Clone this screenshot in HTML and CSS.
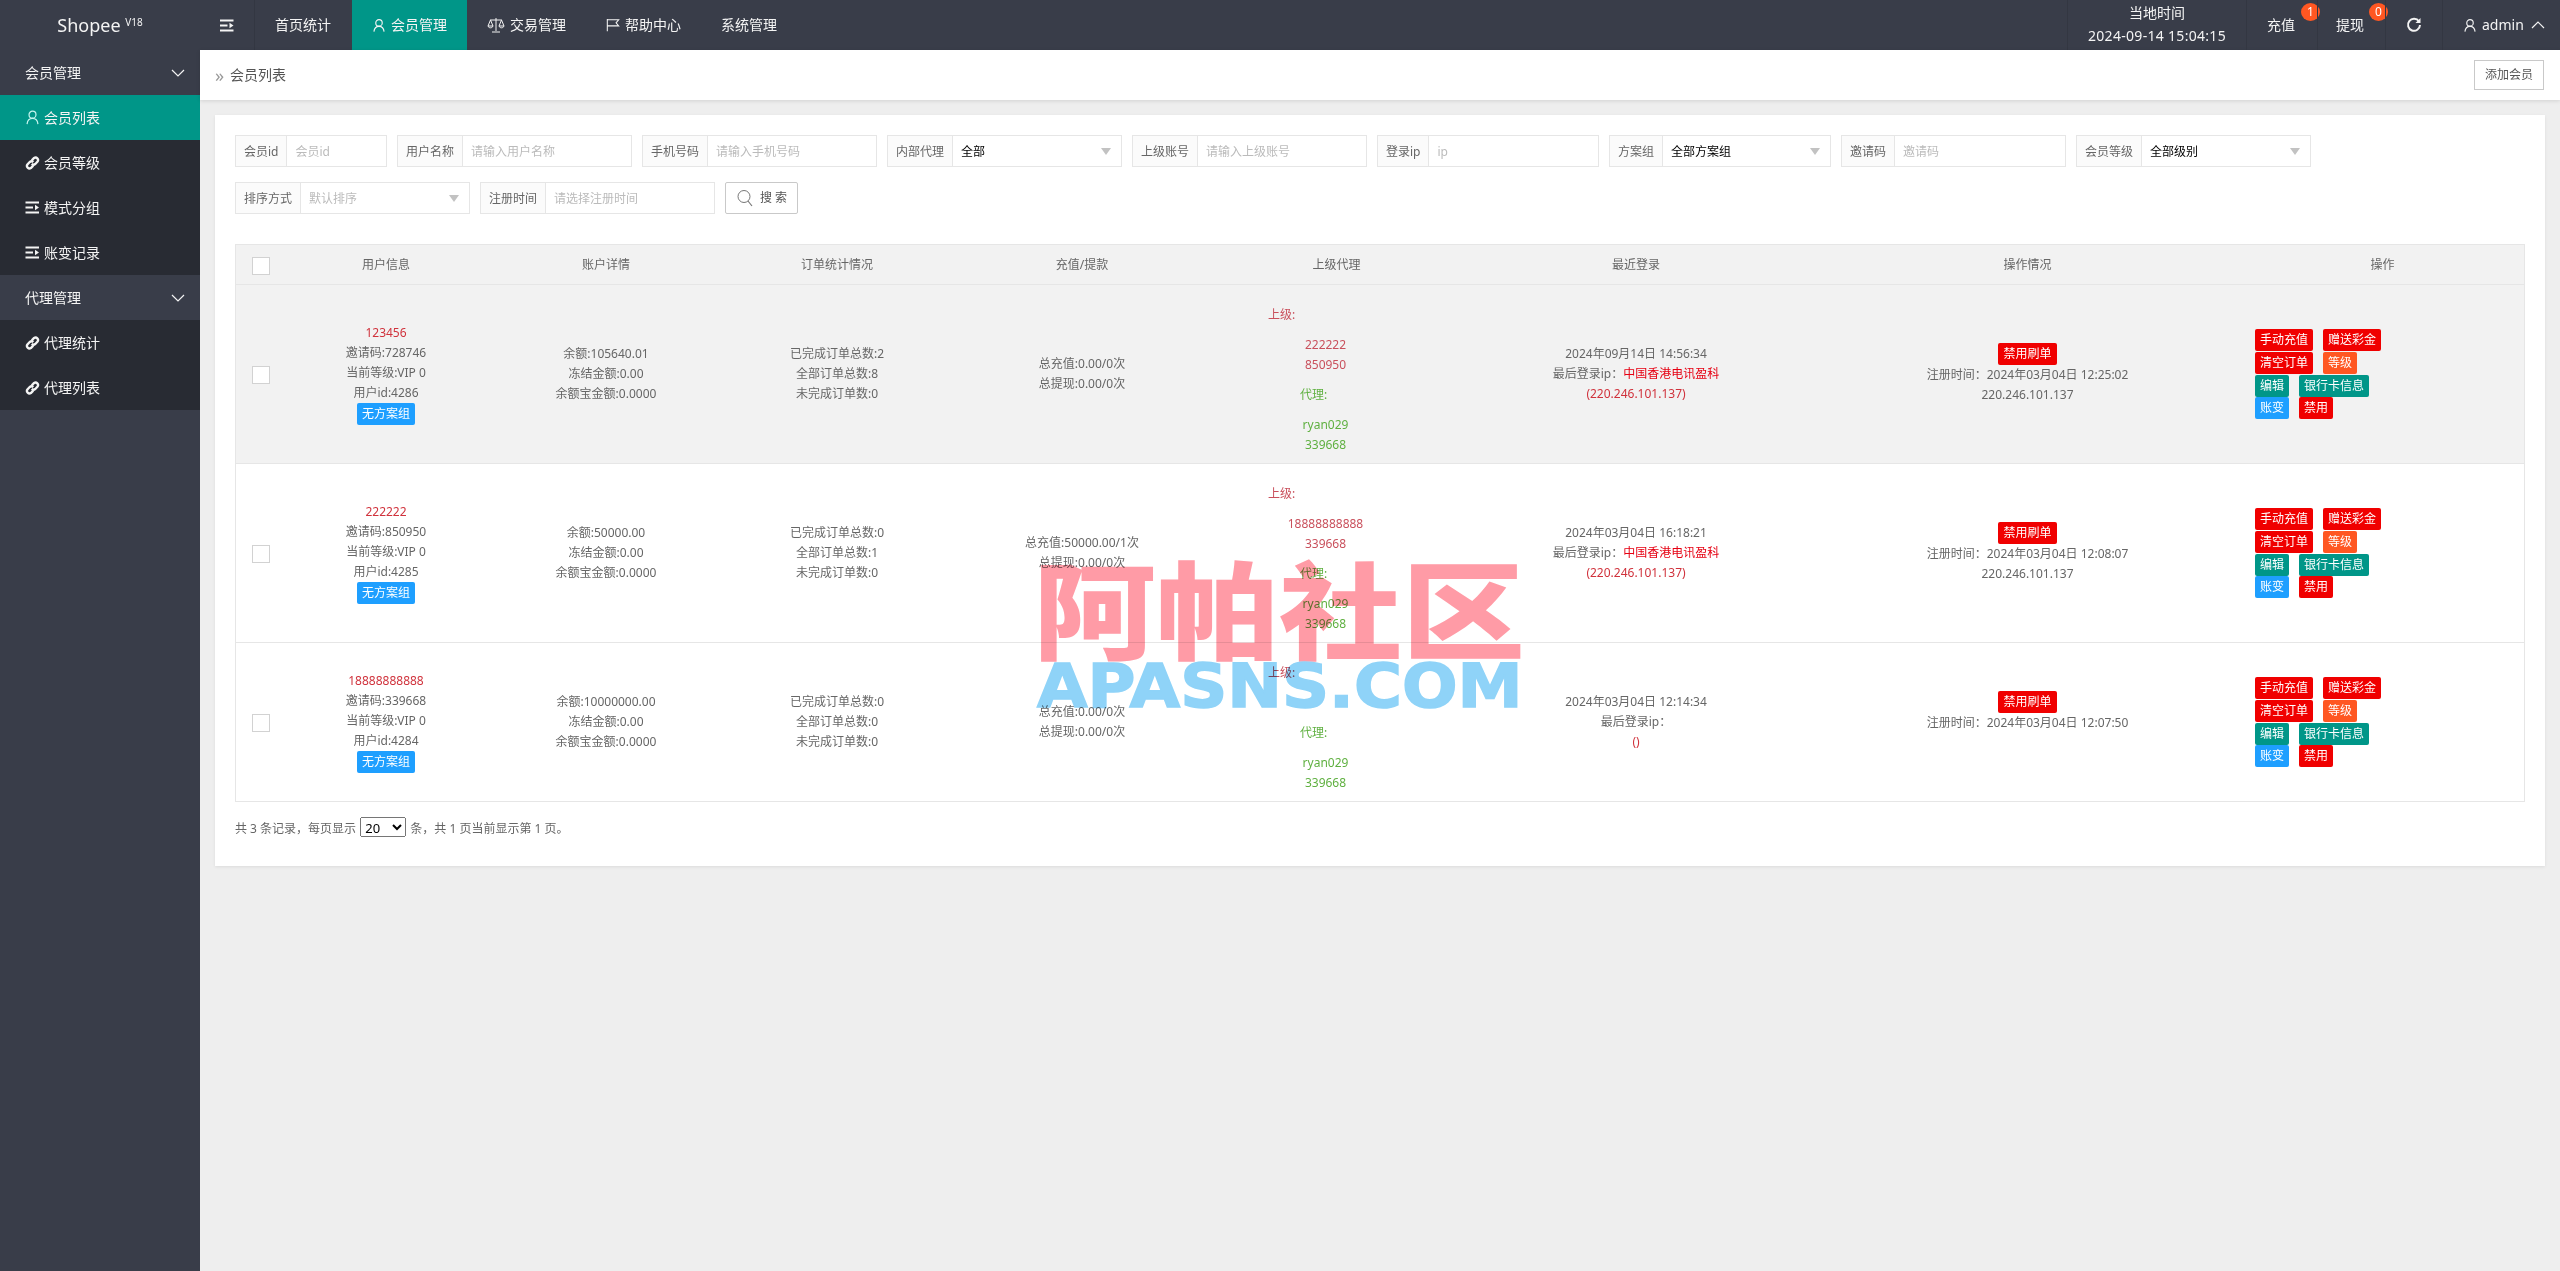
FILE: index.html
```html
<!DOCTYPE HTML>
<html>
    <head>
        <meta http-equiv="Content-Type" content="text/html; charset=UTF-8"/>
        <title>会员列表</title>
        <link rel="stylesheet" href="styles.css">
    </head>
    <body>
        <svg class="icon-defs" width="0" height="0">
            <symbol id="i-user" viewBox="0 0 16 16">
                <circle cx="8" cy="5" r="3.7" fill="none" stroke="currentColor" stroke-width="1.3"/>
                <path d="M2.2 15c.4-3.6 2.6-6 5.8-6s5.4 2.4 5.8 6" fill="none" stroke="currentColor" stroke-width="1.3"/>
            </symbol>
            <symbol id="i-link" viewBox="0 0 16 16">
                <path d="M7.2 5.2 9.7 2.7a2.7 2.7 0 0 1 3.7 3.800L11 9a2.700 2.700 0 0 1-3.800 0" fill="none" stroke="currentColor" stroke-width="2.5"/>
                <path d="M8.800 10.800 6.300 13.300a2.700 2.700 0 0 1-3.700-3.800L5 7a2.700 2.700 0 0 1 3.800 0" fill="none" stroke="currentColor" stroke-width="2.5"/>
            </symbol>
            <symbol id="i-list" viewBox="0 0 14 13">
                <path d="M0 .5h13.500v2H0zM0 5.500h7.500v2H0zM0 10.500h13.500v2H0z" fill="currentColor"/>
                <path d="M9.500 3.800 13.500 6.500 9.500 9.200z" fill="currentColor"/>
            </symbol>
            <symbol id="i-scale" viewBox="0 0 18 16">
                <path d="M9 1v13M5 15h8M3 3h12M3.500 3 1 9c.6 2.400 4.400 2.400 5 0L3.500 3M14.500 3 12 9c.6 2.400 4.400 2.400 5 0l-2.500-6M1 9h5M12 9h5" fill="none" stroke="currentColor" stroke-width="1"/>
            </symbol>
            <symbol id="i-flag" viewBox="0 0 16 16">
                <path d="M1.500 1v14M1.500 2h13l-3 3.500 3 3.500h-13" fill="none" stroke="currentColor" stroke-width="1.200"/>
            </symbol>
        </svg>

        <div class="topbar">
            <div class="logo">Shopee <sup>V18</sup></div>
            <div class="top-toggle"><svg class="ico-list"><use href="#i-list"/></svg></div>
            <a class="top-item">首页统计</a>
            <a class="top-item active"><svg class="ico-user"><use href="#i-user"/></svg>会员管理</a>
            <a class="top-item"><svg class="ico-scale"><use href="#i-scale"/></svg>交易管理</a>
            <a class="top-item"><svg class="ico-flag"><use href="#i-flag"/></svg>帮助中心</a>
            <a class="top-item">系统管理</a>
            <div class="top-right">
                <div class="top-clock">
                    <div>当地时间</div>
                    <div class="top-date">2024-09-14 15:04:15</div>
                </div>
                <div class="top-cell top-cash">充值<span class="dot">1</span></div>
                <div class="top-cell top-draw">提现<span class="dot">0</span></div>
                <div class="top-cell top-reload">
                    <svg width="16" height="16" viewBox="0 0 16 16"><path d="M13 4.500A6 6 0 1 0 14 8" fill="none" stroke="currentColor" stroke-width="2"/><path d="M14.500 1v5h-5z" fill="currentColor"/></svg>
                </div>
                <div class="top-cell top-admin">
                    <svg class="ico-user"><use href="#i-user"/></svg>admin
                    <svg class="chev" width="14" height="8" viewBox="0 0 14 8"><path d="M1 7l6-6 6 6" fill="none" stroke="currentColor" stroke-width="1.200"/></svg>
                </div>
            </div>
        </div>

        <div class="layout">
            <div class="sidebar">
                <div class="side-group">会员管理<svg class="chev" width="14" height="8" viewBox="0 0 14 8"><path d="M1 1l6 6 6-6" fill="none" stroke="currentColor" stroke-width="1.200"/></svg></div>
                <a class="side-item active"><svg class="ico-user"><use href="#i-user"/></svg>会员列表</a>
                <a class="side-item"><svg class="ico-link"><use href="#i-link"/></svg>会员等级</a>
                <a class="side-item"><svg class="ico-list"><use href="#i-list"/></svg>模式分组</a>
                <a class="side-item"><svg class="ico-list"><use href="#i-list"/></svg>账变记录</a>
                <div class="side-group">代理管理<svg class="chev" width="14" height="8" viewBox="0 0 14 8"><path d="M1 1l6 6 6-6" fill="none" stroke="currentColor" stroke-width="1.200"/></svg></div>
                <a class="side-item"><svg class="ico-link"><use href="#i-link"/></svg>代理统计</a>
                <a class="side-item"><svg class="ico-link"><use href="#i-link"/></svg>代理列表</a>
            </div>

            <div class="main">
                <div class="crumb">
                    <span class="crumb-mark">»</span>
                    <span class="crumb-text">会员列表</span>
                    <a class="btn-add">添加会员</a>
                </div>

                <div class="card">
                    <div class="filters">
                        <div class="field w-152"><label>会员id</label><input placeholder="会员id"></div>
                        <div class="field w-235"><label>用户名称</label><input placeholder="请输入用户名称"></div>
                        <div class="field w-235"><label>手机号码</label><input placeholder="请输入手机号码"></div>
                        <div class="field w-235"><label>内部代理</label><div class="pick">全部</div></div>
                        <div class="field w-235"><label>上级账号</label><input placeholder="请输入上级账号"></div>
                        <div class="field w-222"><label>登录ip</label><input placeholder="ip"></div>
                        <div class="field w-222"><label>方案组</label><div class="pick">全部方案组</div></div>
                        <div class="field w-225"><label>邀请码</label><input placeholder="邀请码"></div>
                        <div class="field w-235"><label>会员等级</label><div class="pick">全部级别</div></div>
                        <div class="field w-235"><label>排序方式</label><div class="pick muted">默认排序</div></div>
                        <div class="field w-235"><label>注册时间</label><input placeholder="请选择注册时间"></div>
                        <a class="btn-search">
                            <svg width="16" height="18" viewBox="0 0 16 18"><circle cx="7" cy="7.500" r="6" fill="none" stroke="#777" stroke-width="1"/><path d="M11 12l4 5" stroke="#777" stroke-width="1.200"/></svg>
                            搜&nbsp;索
                        </a>
                    </div>

                    <table class="grid">
                        <thead>
                            <tr>
                                <th class="c-check"><span class="check"></span></th>
                                <th class="c-user">用户信息</th>
                                <th class="c-acct">账户详情</th>
                                <th class="c-order">订单统计情况</th>
                                <th class="c-pay">充值/提款</th>
                                <th class="c-agent">上级代理</th>
                                <th class="c-login">最近登录</th>
                                <th class="c-state">操作情况</th>
                                <th>操作</th>
                            </tr>
                        </thead>
                        <tbody>
                            <tr class="hover">
                                <td><span class="check"></span></td>
                                <td>
                                    <div class="red">123456</div>
                                    <div>邀请码:728746</div>
                                    <div>当前等级:VIP 0</div>
                                    <div>用户id:4286</div>
                                    <span class="tag blue">无方案组</span>
                                </td>
                                <td>
                                    <div>余额:105640.01</div>
                                    <div>冻结金额:0.00</div>
                                    <div>余额宝金额:0.0000</div>
                                </td>
                                <td>
                                    <div>已完成订单总数:2</div>
                                    <div>全部订单总数:8</div>
                                    <div>未完成订单数:0</div>
                                </td>
                                <td>
                                    <div>总充值:0.00/0次</div>
                                    <div>总提现:0.00/0次</div>
                                </td>
                                <td class="agent">
                                    <p class="up-label">上级:</p>
                                    <p class="up-names">222222<br>850950</p>
                                    <p class="down-label">代理:</p>
                                    <p class="down-names">ryan029<br>339668</p>
                                </td>
                                <td>
                                    <div>2024年09月14日 14:56:34</div>
                                    <div>最后登录ip：<span class="hot">中国香港电讯盈科</span></div>
                                    <div class="red">(220.246.101.137)</div>
                                </td>
                                <td>
                                    <span class="tag scarlet">禁用刷单</span>
                                    <div>注册时间：2024年03月04日 12:25:02</div>
                                    <div>220.246.101.137</div>
                                </td>
                                <td class="ops">
                                    <div class="ops-row"><a class="tag scarlet">手动充值</a><a class="tag scarlet">赠送彩金</a></div>
                                    <div class="ops-row"><a class="tag scarlet">清空订单</a><a class="tag orange">等级</a></div>
                                    <div class="ops-row"><a class="tag teal">编辑</a><a class="tag teal">银行卡信息</a></div>
                                    <div class="ops-row last"><a class="tag blue">账变</a><a class="tag scarlet">禁用</a></div>
                                </td>
                            </tr>
                            <tr>
                                <td><span class="check"></span></td>
                                <td>
                                    <div class="red">222222</div>
                                    <div>邀请码:850950</div>
                                    <div>当前等级:VIP 0</div>
                                    <div>用户id:4285</div>
                                    <span class="tag blue">无方案组</span>
                                </td>
                                <td>
                                    <div>余额:50000.00</div>
                                    <div>冻结金额:0.00</div>
                                    <div>余额宝金额:0.0000</div>
                                </td>
                                <td>
                                    <div>已完成订单总数:0</div>
                                    <div>全部订单总数:1</div>
                                    <div>未完成订单数:0</div>
                                </td>
                                <td>
                                    <div>总充值:50000.00/1次</div>
                                    <div>总提现:0.00/0次</div>
                                </td>
                                <td class="agent">
                                    <p class="up-label">上级:</p>
                                    <p class="up-names">18888888888<br>339668</p>
                                    <p class="down-label">代理:</p>
                                    <p class="down-names">ryan029<br>339668</p>
                                </td>
                                <td>
                                    <div>2024年03月04日 16:18:21</div>
                                    <div>最后登录ip：<span class="hot">中国香港电讯盈科</span></div>
                                    <div class="red">(220.246.101.137)</div>
                                </td>
                                <td>
                                    <span class="tag scarlet">禁用刷单</span>
                                    <div>注册时间：2024年03月04日 12:08:07</div>
                                    <div>220.246.101.137</div>
                                </td>
                                <td class="ops">
                                    <div class="ops-row"><a class="tag scarlet">手动充值</a><a class="tag scarlet">赠送彩金</a></div>
                                    <div class="ops-row"><a class="tag scarlet">清空订单</a><a class="tag orange">等级</a></div>
                                    <div class="ops-row"><a class="tag teal">编辑</a><a class="tag teal">银行卡信息</a></div>
                                    <div class="ops-row last"><a class="tag blue">账变</a><a class="tag scarlet">禁用</a></div>
                                </td>
                            </tr>
                            <tr>
                                <td><span class="check"></span></td>
                                <td>
                                    <div class="red">18888888888</div>
                                    <div>邀请码:339668</div>
                                    <div>当前等级:VIP 0</div>
                                    <div>用户id:4284</div>
                                    <span class="tag blue">无方案组</span>
                                </td>
                                <td>
                                    <div>余额:10000000.00</div>
                                    <div>冻结金额:0.00</div>
                                    <div>余额宝金额:0.0000</div>
                                </td>
                                <td>
                                    <div>已完成订单总数:0</div>
                                    <div>全部订单总数:0</div>
                                    <div>未完成订单数:0</div>
                                </td>
                                <td>
                                    <div>总充值:0.00/0次</div>
                                    <div>总提现:0.00/0次</div>
                                </td>
                                <td class="agent">
                                    <p class="up-label">上级:</p>
                                    <p class="up-names empty"></p>
                                    <p class="down-label">代理:</p>
                                    <p class="down-names">ryan029<br>339668</p>
                                </td>
                                <td>
                                    <div>2024年03月04日 12:14:34</div>
                                    <div>最后登录ip：</div>
                                    <div class="red">()</div>
                                </td>
                                <td>
                                    <span class="tag scarlet">禁用刷单</span>
                                    <div>注册时间：2024年03月04日 12:07:50</div>
                                    <div>&nbsp;</div>
                                </td>
                                <td class="ops">
                                    <div class="ops-row"><a class="tag scarlet">手动充值</a><a class="tag scarlet">赠送彩金</a></div>
                                    <div class="ops-row"><a class="tag scarlet">清空订单</a><a class="tag orange">等级</a></div>
                                    <div class="ops-row"><a class="tag teal">编辑</a><a class="tag teal">银行卡信息</a></div>
                                    <div class="ops-row last"><a class="tag blue">账变</a><a class="tag scarlet">禁用</a></div>
                                </td>
                            </tr>
                        </tbody>
                    </table>

                    <div class="pager">
                        共 3 条记录，每页显示
                        <select><option>20</option></select>
                        条，共 1 页当前显示第 1 页。
                    </div>
                </div>
            </div>
        </div>

        <div class="watermark">
            <div class="wm-cn">阿帕社区</div>
            <div class="wm-en">APASNS.COM</div>
        </div>
    </body>
</html>
```

FILE: styles.css
```css
html,body{
    margin:0;
    height:100%;
}
body{
    display:flex;
    flex-direction:column;
    overflow:hidden;
    background:#eee;
    color:#666;
    font:12px/20px "Noto Sans","Noto Sans CJK SC",sans-serif;
}
a{
    color:inherit;
    text-decoration:none;
}
p{
    margin:0;
}
.icon-defs{
    position:absolute;
}

/* top bar */
.topbar{
    display:flex;
    flex:none;
    height:50px;
    background:#393d49;
    color:#f4f4f4;
    font-size:14px;
}
.logo{
    width:200px;
    text-align:center;
    font-size:18px;
    line-height:50px;
}
.logo sup{
    font-size:10px;
    line-height:0;
    vertical-align:6px;
}
.top-toggle{
    display:flex;
    align-items:center;
    justify-content:center;
    width:55px;
    box-sizing:border-box;
    border-right:1px solid #333742;
}
.ico-list{
    width:14px;
    height:13px;
}
.top-item{
    display:flex;
    align-items:center;
    padding:0 20px;
    white-space:nowrap;
}
.top-toggle + .top-item{
    padding-right:21px;
}
.top-item.active{
    background:#009688;
}
.ico-user{
    width:14px;
    height:15px;
    margin-right:5px;
}
.ico-scale{
    width:18px;
    height:16px;
    margin-right:5px;
}
.ico-flag{
    width:14px;
    height:14px;
    margin-right:5px;
}
.top-right{
    display:flex;
    margin-left:auto;
}
.top-clock{
    width:179px;
    box-sizing:border-box;
    border-left:1px solid #333742;
    padding-top:1px;
    text-align:center;
    line-height:23px;
}
.top-date{
    letter-spacing:.3px;
}
.top-cell{
    display:flex;
    align-items:center;
    position:relative;
    box-sizing:border-box;
    border-left:1px solid #333742;
}
.top-cash{
    width:71px;
    padding-left:20px;
}
.top-draw{
    width:68px;
    padding-left:18px;
}
.top-reload{
    width:57px;
    justify-content:center;
}
.top-admin{
    width:118px;
    padding-left:20px;
}
.top-admin .chev{
    margin-left:7px;
}
.dot{
    position:absolute;
    top:3px;
    right:-3px;
    width:19px;
    height:18px;
    border-radius:50%;
    background:#ff5722;
    color:#fff;
    font-size:12px;
    line-height:18px;
    text-align:center;
}

/* side menu */
.layout{
    display:flex;
    flex:1;
    min-height:0;
}
.sidebar{
    flex:none;
    width:200px;
    background:#393d49;
    color:#f4f4f4;
    font-size:14px;
}
.side-group{
    display:flex;
    align-items:center;
    justify-content:space-between;
    height:45px;
    padding:0 15px 0 25px;
}
.side-item{
    display:flex;
    align-items:center;
    height:45px;
    padding-left:25px;
    background:#282b33;
}
.side-item svg{
    flex:none;
    width:15px;
    margin-right:4px;
}
.side-item.active{
    background:#009688;
}
.side-item .ico-user{
    height:15px;
    color:#c4f5ee;
}
.ico-link{
    height:16px;
}

/* content */
.main{
    flex:1;
    min-width:0;
}
.crumb{
    display:flex;
    align-items:center;
    height:50px;
    padding:0 16px 0 15px;
    background:#fff;
    box-shadow:0 1px 4px rgba(0,0,0,.12);
    color:#555;
    font-size:14px;
}
.crumb-mark{
    width:15px;
    color:#999;
    font-size:18px;
}
.btn-add{
    margin-left:auto;
    height:28px;
    padding:0 10px;
    border:1px solid #c9c9c9;
    color:#555;
    font-size:12px;
    line-height:28px;
}
.card{
    margin:15px;
    padding:20px 20px 27px;
    background:#fff;
    box-shadow:0 1px 3px rgba(0,0,0,.08);
}

/* search form */
.filters{
    display:flex;
    flex-wrap:wrap;
    gap:15px 10px;
    margin-bottom:30px;
}
.field{
    display:flex;
    box-sizing:border-box;
    height:32px;
    border:1px solid #e6e6e6;
    background:#fff;
}
.w-152{
    width:152px;
}
.w-222{
    width:222px;
}
.w-225{
    width:225px;
}
.w-235{
    width:235px;
}
.field label{
    flex:none;
    padding:0 8px;
    border-right:1px solid #e6e6e6;
    background:#fbfbfb;
    line-height:32px;
}
.field input{
    flex:1;
    width:0;
    padding:2px 8px 0;
    border:0;
    outline:0;
    background:none;
    font:inherit;
}
.field input::placeholder{
    color:#bbb;
}
.pick{
    flex:1;
    position:relative;
    padding-left:8px;
    color:#000;
    line-height:32px;
}
.pick.muted{
    color:#bbb;
}
.pick::after{
    content:"";
    position:absolute;
    top:12px;
    right:10px;
    border:5px solid transparent;
    border-top:7px solid #c2c2c2;
    border-bottom:0;
}
.btn-search{
    display:flex;
    align-items:center;
    gap:7px;
    box-sizing:border-box;
    height:32px;
    padding:0 10px 0 11px;
    border:1px solid #c9c9c9;
    border-radius:2px;
    color:#555;
}

/* list table */
.grid{
    width:100%;
    table-layout:fixed;
    border-collapse:collapse;
}
.grid th,
.grid td{
    padding:9px 15px;
    border:1px solid #e6e6e6;
    border-width:1px 0;
    text-align:center;
    font-weight:normal;
}
.grid tr > :first-child{
    border-left-width:1px;
}
.grid tr > :last-child{
    border-right-width:1px;
}
.grid th{
    height:21px;
    background:#f2f2f2;
}
.hover td{
    background:#f2f2f2;
}
.c-check{
    width:19px;
}
.c-user{
    width:172px;
}
.c-acct{
    width:208px;
}
.c-order{
    width:194px;
}
.c-pay{
    width:236px;
}
.c-agent{
    width:213px;
}
.c-login{
    width:326px;
}
.c-state{
    width:397px;
}
.check{
    display:block;
    box-sizing:border-box;
    width:18px;
    height:18px;
    margin:2px auto 0;
    border:1px solid #d2d2d2;
    background:#fff;
}
.red{
    color:#d0323c;
}
.hot{
    color:#e60012;
}
.tag{
    display:inline-block;
    height:22px;
    padding:0 5px;
    border-radius:2px;
    color:#fff;
    line-height:22px;
    white-space:nowrap;
}
.blue{
    background:#1e9fff;
}
.scarlet{
    background:#f00000;
}
.orange{
    background:#ff5722;
}
.teal{
    background:#009688;
}

/* parent / agent column */
.grid td.agent{
    padding:20px 15px 8px;
    text-align:left;
}
.agent p{
    margin-bottom:10px;
}
.agent p:last-child{
    margin-bottom:0;
}
.up-label{
    padding-left:38px;
    color:#c9505c;
}
.up-names{
    padding-right:22px;
    text-align:center;
    color:#c9505c;
}
.up-names.empty{
    height:20px;
}
.down-label{
    padding-left:70px;
    color:#5fb040;
}
.down-names{
    padding-right:22px;
    text-align:center;
    color:#5fb040;
}

/* buttons */
.grid td.ops{
    padding-left:14px;
    text-align:left;
}
.ops-row{
    display:flex;
    gap:10px;
    margin-bottom:1px;
}
.ops-row:nth-child(3),
.ops-row.last{
    margin-bottom:0;
}

/* footer */
.pager{
    margin-top:15px;
    white-space:nowrap;
}
.pager select{
    width:46px;
    height:20px;
    margin:0 1px;
    font:inherit;
    font-size:13px;
}

/* site stamp over the picture */
.watermark{
    position:absolute;
    left:1033px;
    top:557px;
    width:484px;
    mix-blend-mode:multiply;
    pointer-events:none;
    font-weight:900;
    white-space:nowrap;
}
.wm-cn{
    color:#ff9ba6;
    font-family:"Noto Sans CJK SC",sans-serif;
    font-size:106px;
    line-height:96px;
    transform:scaleX(1.16);
    transform-origin:0 0;
}
.wm-en{
    margin:11px 0 0 4px;
    color:#8fd3f8;
    font-family:"DejaVu Sans",sans-serif;
    font-weight:bold;
    font-size:60px;
    line-height:44px;
    -webkit-text-stroke:1.5px #8fd3f8;
    transform:scaleX(1.09);
    transform-origin:0 0;
}
```
